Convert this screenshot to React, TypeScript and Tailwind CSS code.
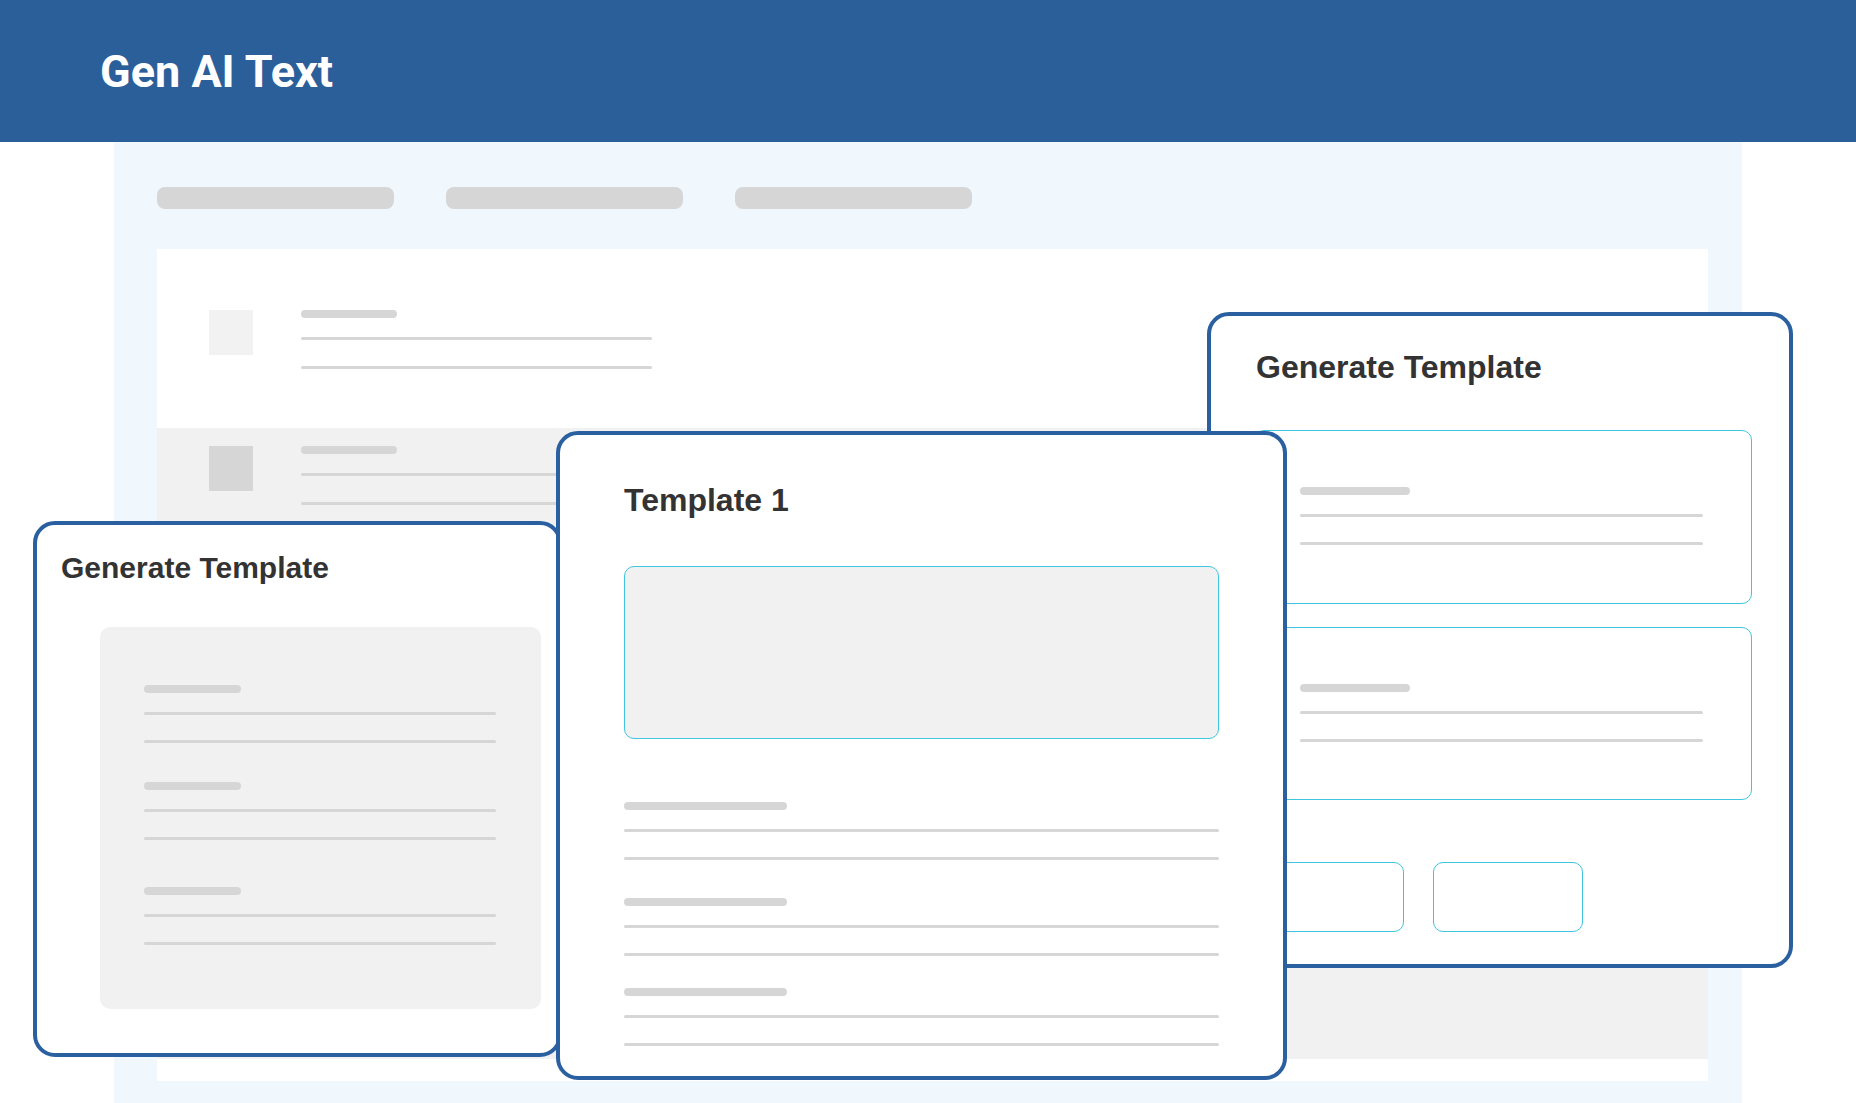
import React from 'react';

const title = { fontFamily: '"Liberation Sans", Arial, sans-serif' };

function Bar({ w, mt = 0 }: { w: number; mt?: number }) {
  return <div className="h-[8px] rounded-full bg-[#d6d6d6]" style={{ width: w, marginTop: mt }} />;
}

function Line({ w, mt }: { w: number; mt: number }) {
  return <div className="h-[3px] rounded-full bg-[#d6d6d6]" style={{ width: w, marginTop: mt }} />;
}

function Group({ bar, line, mt = 0 }: { bar: number; line: number; mt?: number }) {
  return (
    <div style={{ marginTop: mt }}>
      <Bar w={bar} />
      <Line w={line} mt={19} />
      <Line w={line} mt={25} />
    </div>
  );
}

function ListRow({ gray }: { gray?: boolean }) {
  return (
    <div className={`flex h-[179px] items-start gap-[48px] pl-[52px] ${gray ? 'bg-[#f1f1f1] pt-[18px]' : 'bg-white pt-[61px]'}`}>
      <div className={`h-[45px] w-[44px] ${gray ? 'bg-[#d6d6d6]' : 'bg-[#f2f2f2]'}`} />
      <div>
        <Bar w={96} />
        <Line w={351} mt={19} />
        <Line w={351} mt={26} />
      </div>
    </div>
  );
}

export default function App() {
  return (
    <div className="relative h-[1103px] w-[1856px] overflow-hidden bg-white">
      <header className="flex h-[142px] items-center bg-[#2b5f9a] pl-[100px]">
        <h1 className="text-[45px] font-bold leading-none text-white" style={{ fontFamily: 'Roboto, "Liberation Sans", sans-serif' }}>
          Gen AI Text
        </h1>
      </header>

      <main className="ml-[114px] h-[961px] w-[1628px] bg-[#f0f8fe] px-[43px] pt-[45px]">
        <div className="flex gap-[52px]">
          <div className="h-[22px] w-[237px] rounded-lg bg-[#d6d6d6]" />
          <div className="h-[22px] w-[237px] rounded-lg bg-[#d6d6d6]" />
          <div className="h-[22px] w-[237px] rounded-lg bg-[#d6d6d6]" />
        </div>

        <section className="mt-[40px] flex h-[832px] w-[1551px] flex-col bg-white">
          <ListRow />
          <ListRow gray />
          <div className="h-[179px] bg-white" />
          <div className="flex-1 bg-[#f1f1f1]" />
          <div className="h-[22px] bg-white" />
        </section>
      </main>

      {/* left card */}
      <div className="absolute left-[33px] top-[521px] h-[536px] w-[529px] rounded-[22px] border-4 border-[#2b60a0] bg-white pl-[24px] pt-[28px]" style={title}>
        <h2 className="text-[30px] font-bold leading-none text-[#333333]">Generate Template</h2>
        <div className="ml-[39px] mt-[44px] h-[382px] w-[441px] rounded-[10px] bg-[#f1f1f1] pl-[44px] pt-[58px]">
          <Group bar={97} line={352} />
          <Group bar={97} line={352} mt={39} />
          <Group bar={97} line={352} mt={47} />
        </div>
      </div>

      {/* right card */}
      <div className="absolute left-[1207px] top-[312px] h-[656px] w-[586px] rounded-[22px] border-4 border-[#2b60a0] bg-white pl-[43px] pt-[35px]" style={title}>
        <h2 className="ml-[2px] text-[32px] font-bold leading-none text-[#333333]">Generate Template</h2>
        <div className="mt-[47px] h-[174px] w-[498px] rounded-[10px] border border-[#40c6de] pl-[45px] pt-[56px]">
          <Group bar={110} line={403} />
        </div>
        <div className="mt-[23px] h-[173px] w-[498px] rounded-[10px] border border-[#40c6de] pl-[45px] pt-[56px]">
          <Group bar={110} line={403} />
        </div>
        <div className="mt-[62px] flex gap-[29px]">
          <div className="h-[70px] w-[150px] rounded-[10px] border border-[#40c6de]" />
          <div className="h-[70px] w-[150px] rounded-[10px] border border-[#40c6de]" />
        </div>
      </div>

      {/* middle card */}
      <div className="absolute left-[556px] top-[431px] h-[649px] w-[731px] rounded-[22px] border-4 border-[#2b60a0] bg-white pl-[64px] pt-[49px]" style={title}>
        <h2 className="text-[32px] font-bold leading-none text-[#333333]">Template 1</h2>
        <div className="mt-[50px] h-[173px] w-[595px] rounded-[10px] border border-[#40c6de] bg-[#f1f1f1]" />
        <div className="mt-[63px]">
          <Group bar={163} line={595} />
          <Group bar={163} line={595} mt={38} />
          <Group bar={163} line={595} mt={32} />
        </div>
      </div>
    </div>
  );
}
